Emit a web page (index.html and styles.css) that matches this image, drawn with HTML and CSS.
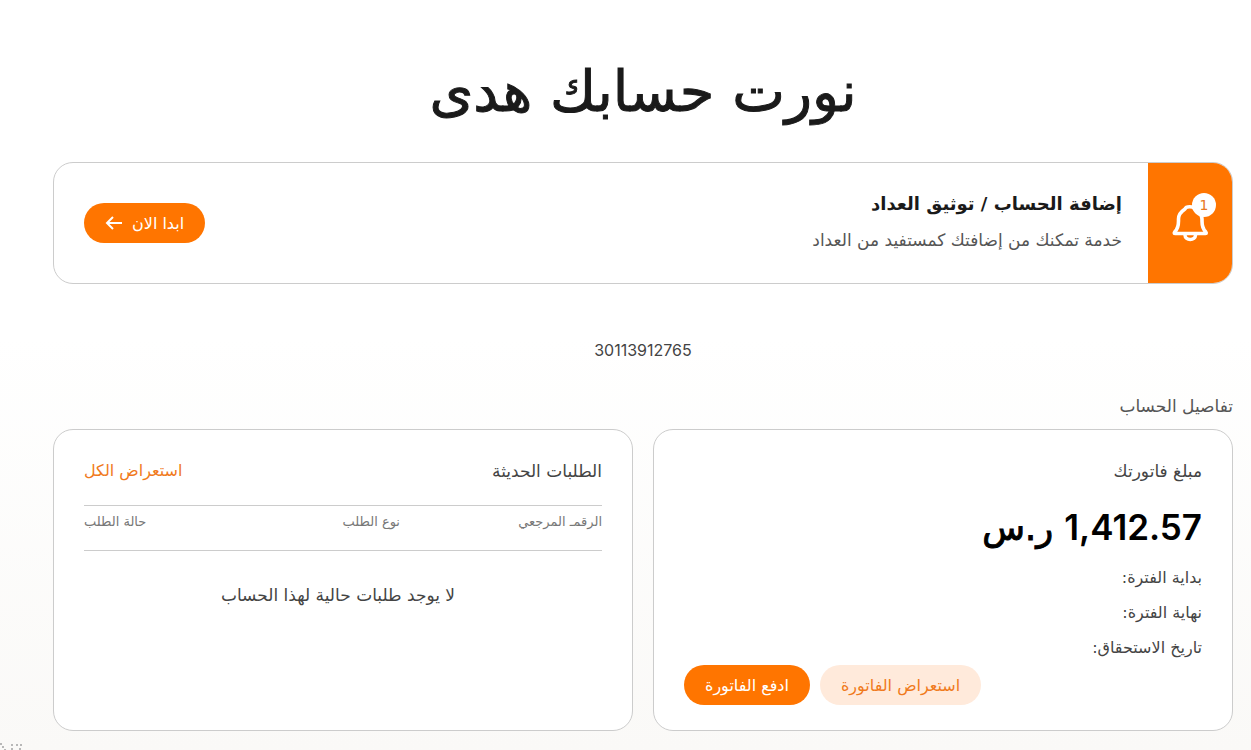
FILE: index.html
```html
<!DOCTYPE html>
<html lang="ar" dir="rtl">
<head>
    <meta charset="UTF-8">
    <meta name="viewport" content="width=device-width, initial-scale=1.0">
    <title>تفاصيل الحساب</title>
    <link rel="stylesheet" href="styles.css">
</head>
<body>
    <main class="container">
        <h1 class="page-title">نورت حسابك هدى</h1>

        <section class="notice">
            <div class="notice-icon">
                <svg width="38" height="40" viewBox="0 0 38 40" fill="none">
                    <path d="M4 30.500Q2.500 30.500 4 28.500C6.500 26 7.500 23 7.500 18V16C7.500 10.500 11 8 14 6C15 3 22.500 3 23.500 6C27.500 8 31 10.500 31 16V18C31 23 32 26 34.500 28.500Q36 30.500 34.500 30.500Z" stroke="#fff" stroke-width="3.600" stroke-linejoin="round"/>
                    <path d="M14 32C14 38 24.500 38 24.500 32" stroke="#fff" stroke-width="3.500"/>
                </svg>
                <span class="badge">1</span>
            </div>
            <div class="notice-text">
                <h2>إضافة الحساب / توثيق العداد</h2>
                <p>خدمة تمكنك من إضافتك كمستفيد من العداد</p>
            </div>
            <button class="btn btn-start" type="button">
                ابدا الان
                <svg width="17" height="14" viewBox="0 0 17 14" fill="none" stroke="#fff" stroke-width="2">
                    <path d="M8 1L2 7L8 13M2 7H17"/>
                </svg>
            </button>
        </section>

        <p class="account-number">30113912765</p>

        <h2 class="section-title">تفاصيل الحساب</h2>

        <div class="cards">
            <section class="card bill">
                <h3>مبلغ فاتورتك</h3>
                <p class="amount"><span class="number">1,412.57</span> ر.س</p>
                <ul class="period">
                    <li>بداية الفترة:</li>
                    <li>نهاية الفترة:</li>
                    <li>تاريخ الاستحقاق:</li>
                </ul>
                <div class="actions">
                    <button class="btn btn-light" type="button">استعراض الفاتورة</button>
                    <button class="btn" type="button">ادفع الفاتورة</button>
                </div>
            </section>

            <section class="card requests">
                <div class="card-head">
                    <h3>الطلبات الحديثة</h3>
                    <a href="#">استعراض الكل</a>
                </div>
                <table class="requests-table">
                    <thead>
                        <tr>
                            <th>الرقمـ المرجعي</th>
                            <th>نوع الطلب</th>
                            <th>حالة الطلب</th>
                        </tr>
                    </thead>
                </table>
                <p class="empty">لا يوجد طلبات حالية لهذا الحساب</p>
            </section>
        </div>
    </main>

    <svg class="dots" width="24" height="8" viewBox="0 0 24 8" fill="#b8b8b8">
        <path d="M0 1h2v2h-2zM2 4h2v2h-2zM4 7h2v1h-2zM11 2h2v2h-2zM16 2h2v2h-2zM20 2h2v2h-2zM11 6h2v2h-2zM19 6h2v2h-2z"/>
    </svg>
</body>
</html>
```
FILE: styles.css
```css
* {
    box-sizing: border-box;
}
body {
    font-family: 'DejaVu Sans', sans-serif;
    font-size: 17px;
    line-height: 24px;
    color: #444;
    margin: 0;
    min-height: 100vh;
    background: linear-gradient(#fff 45%, #faf9f7);
}
h1, h2, h3, p, ul {
    margin: 0;
    padding: 0;
    font-weight: normal;
}
ul {
    list-style: none;
}
.container {
    padding: 56px 18px 18px 53px;
}
.page-title {
    font-size: 56px;
    line-height: 72px;
    color: #1a1a1a;
    text-align: center;
    -webkit-text-stroke: 1px #1a1a1a;
}
.notice {
    display: flex;
    align-items: center;
    min-height: 122px;
    margin-top: 34px;
    border: 1px solid #ccc;
    border-radius: 20px;
    background: #fff;
    overflow: hidden;
}
.notice-icon {
    position: relative;
    display: flex;
    align-items: center;
    justify-content: center;
    align-self: stretch;
    width: 84px;
    background: #ff7500;
}
.badge {
    position: absolute;
    top: 30px;
    right: 16px;
    width: 24px;
    height: 24px;
    border-radius: 50%;
    background: #fff;
    color: #e87722;
    font-size: 14px;
    text-align: center;
}
.notice-text {
    flex: 1;
    padding: 0 26px 2px;
}
.notice-text h2 {
    font-size: 18px;
    font-weight: bold;
    color: #1a1a1a;
    margin-bottom: 12px;
}
.notice-text p {
    color: #555;
}
.btn {
    height: 40px;
    padding: 0 21px;
    border: none;
    border-radius: 20px;
    background: #ff7500;
    color: #fff;
    font-family: inherit;
    font-size: 16px;
    cursor: pointer;
}
.btn-start {
    display: flex;
    align-items: center;
    gap: 10px;
    margin-left: 30px;
}
.btn-light {
    background: #ffeadb;
    color: #f07a1c;
}
.account-number {
    margin-top: 54px;
    font-family: Inter, sans-serif;
    font-size: 16px;
    text-align: center;
}
.section-title {
    font-size: 17px;
    margin-top: 32px;
    color: #555;
}
.cards {
    display: grid;
    grid-template-columns: 1fr 1fr;
    gap: 20px;
    margin-top: 11px;
}
.card {
    min-height: 302px;
    padding: 29px 30px 25px;
    border: 1px solid #ccc;
    border-radius: 20px;
    background: #fff;
}
.card h3 {
    font-size: 17px;
}
.bill {
    display: flex;
    flex-direction: column;
}
.amount {
    font-size: 35px;
    line-height: 48px;
    margin-top: 20px;
    color: #000;
    -webkit-text-stroke: 1px #000;
}
.number {
    font-family: Inter, sans-serif;
    font-weight: 600;
    -webkit-text-stroke: 0;
}
.period {
    margin-top: 8px;
    font-size: 16px;
}
.period li {
    line-height: 35px;
}
.actions {
    display: flex;
    justify-content: flex-end;
    gap: 10px;
}
.card-head {
    display: flex;
    justify-content: space-between;
}
.card-head a {
    color: #f07a1c;
    font-size: 16px;
    text-decoration: none;
}
.requests-table {
    width: 100%;
    margin-top: 22px;
    border-collapse: collapse;
    border-top: 1px solid #ccc;
    border-bottom: 1px solid #ccc;
}
.requests-table th {
    width: 39%;
    padding: 4px 0 16px;
    font-size: 13px;
    font-weight: normal;
    color: #777;
    text-align: right;
}
.requests-table th:last-child {
    width: 22%;
    text-align: left;
}
.empty {
    margin-top: 32px;
    padding-left: 0;
    padding-right: 10px;
    text-align: center;
}
.dots {
    position: absolute;
    left: 0;
    bottom: 0;
}
```
